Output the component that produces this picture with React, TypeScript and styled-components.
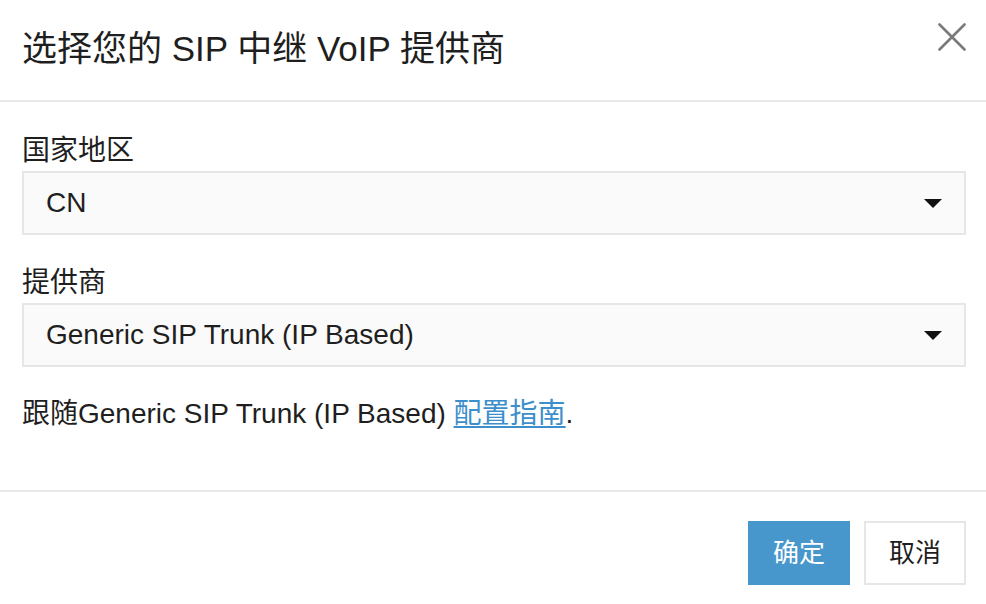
import React from "react";
import styled, { createGlobalStyle } from "styled-components";

const Global = createGlobalStyle`
  html, body { margin: 0; padding: 0; background: #ffffff; }
  body {
    font-family: "Liberation Sans", "Noto Sans CJK SC", sans-serif;
    color: #222222;
  }
`;

const Dialog = styled.div`
  width: 986px;
  height: 604px;
  display: flex;
  flex-direction: column;
  background: #ffffff;
  overflow: hidden;
`;

const Header = styled.div`
  height: 100px;
  padding: 0 20px 0 22px;
  display: flex;
  justify-content: space-between;
  align-items: center;
  border-bottom: 2px solid #e8e8e8;
`;

const Title = styled.h1`
  margin: 0 0 3px 0;
  font-size: 35px;
  font-weight: normal;
  line-height: 40px;
  color: #1f1f1f;
`;

const Close = styled.button`
  align-self: flex-start;
  margin-top: 23px;
  width: 28px;
  height: 28px;
  padding: 0;
  border: none;
  background: transparent;
  display: flex;
  cursor: pointer;
`;

const Body = styled.div`
  padding: 29px 20px 56px 22px;
  display: flex;
  flex-direction: column;
`;

const Label = styled.div`
  font-size: 28px;
  line-height: 40px;
  color: #1f1f1f;
`;

const Select = styled.div<{ $gap?: number }>`
  height: 64px;
  box-sizing: border-box;
  border: 2px solid #e6e6e6;
  background: #fafafa;
  display: flex;
  align-items: center;
  justify-content: space-between;
  padding: 0 22px 0 22px;
  margin-bottom: ${(p) => p.$gap ?? 28}px;
  font-size: 28px;
  color: #1f1f1f;
`;

const Arrow = styled.span`
  width: 0;
  height: 0;
  border-left: 9px solid transparent;
  border-right: 9px solid transparent;
  border-top: 9px solid #111111;
  margin-top: 1px;
`;

const Note = styled.div`
  font-size: 28px;
  line-height: 40px;
  color: #1f1f1f;
`;

const Link = styled.a`
  color: #3d8fcb;
  text-decoration: underline;
  text-underline-offset: 3px;
  text-decoration-thickness: 2px;
`;

const Footer = styled.div`
  border-top: 2px solid #e8e8e8;
  padding: 29px 20px 0 22px;
  display: flex;
  justify-content: flex-end;
  gap: 14px;
`;

const Button = styled.button<{ $primary?: boolean }>`
  width: 102px;
  height: 64px;
  box-sizing: border-box;
  font-family: "Noto Sans CJK SC", sans-serif;
  font-size: 26px;
  line-height: 30px;
  padding: 0 0 4px 0;
  border: 2px solid ${(p) => (p.$primary ? "#4796cc" : "#e6e6e6")};
  background: ${(p) => (p.$primary ? "#4796cc" : "#ffffff")};
  color: ${(p) => (p.$primary ? "#ffffff" : "#1f1f1f")};
  cursor: pointer;
`;

export default function App() {
  return (
    <Dialog>
      <Global />
      <Header>
        <Title>选择您的 SIP 中继 VoIP 提供商</Title>
        <Close aria-label="关闭">
          <svg width="28" height="28" viewBox="0 0 28 28">
            <path d="M1.5 1.5 L26.5 26.5 M26.5 1.5 L1.5 26.5" stroke="#7a7a7a" strokeWidth="2.6" strokeLinecap="round" />
          </svg>
        </Close>
      </Header>
      <Body>
        <Label>国家地区</Label>
        <Select>
          <span>CN</span>
          <Arrow />
        </Select>
        <Label>提供商</Label>
        <Select $gap={27}>
          <span>Generic SIP Trunk (IP Based)</span>
          <Arrow />
        </Select>
        <Note>
          跟随Generic SIP Trunk (IP Based) <Link href="#">配置指南</Link>.
        </Note>
      </Body>
      <Footer>
        <Button $primary>确定</Button>
        <Button>取消</Button>
      </Footer>
    </Dialog>
  );
}
